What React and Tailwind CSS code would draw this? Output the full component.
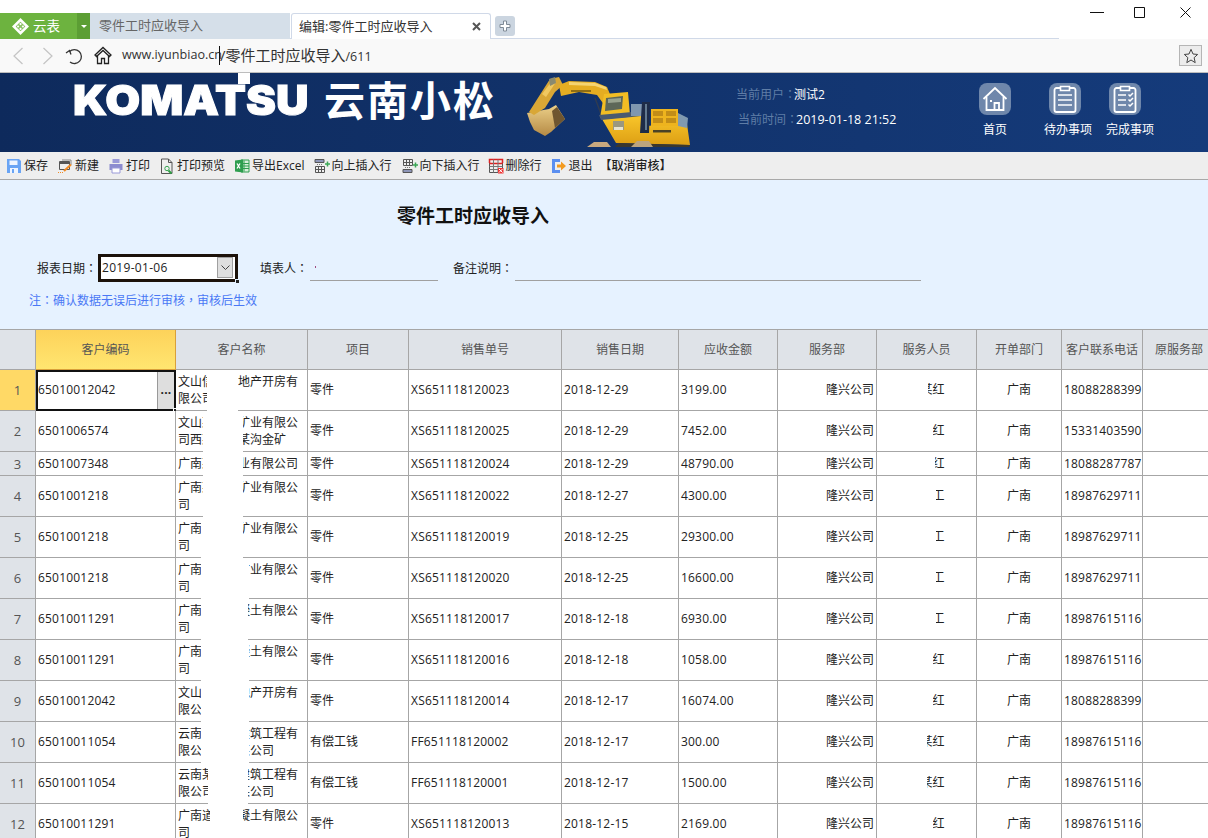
import React from "react";

const C = {
  base: "font-['Open_Sans','Noto_Sans_CJK_SC',sans-serif]",
};

const rows = [
  { n: 1, code: "65010012042", name: "文山信某某地产开房有限公司", item: "零件", no: "XS651118120023", date: "2018-12-29", amt: "3199.00", who: "某某红", tel: "18088288399", h: "h-[41px]", m1: [31, 31], m2: [29, 22] },
  { n: 2, code: "6501006574", name: "文山某某某矿业有限公司西某某某某沟金矿", item: "零件", no: "XS651118120025", date: "2018-12-29", amt: "7452.00", who: "某某红", tel: "15331403590", h: "h-[41px]", m1: [27, 40], m2: [29, 27] },
  { n: 3, code: "6501007348", name: "广南某某矿业有限公司", item: "零件", no: "XS651118120024", date: "2018-12-29", amt: "48790.00", who: "某某红", tel: "18088287787", h: "h-[24px]", m1: [27, 40], m2: [30, 28] },
  { n: 4, code: "6501001218", name: "广南某某某矿业有限公司", item: "零件", no: "XS651118120022", date: "2018-12-27", amt: "4300.00", who: "某某工", tel: "18987629711", h: "h-[41px]", m1: [27, 40], m2: [30, 29] },
  { n: 5, code: "6501001218", name: "广南某某某矿业有限公司", item: "零件", no: "XS651118120019", date: "2018-12-25", amt: "29300.00", who: "某某工", tel: "18987629711", h: "h-[41px]", m1: [25, 42], m2: [30, 29] },
  { n: 6, code: "6501001218", name: "广南某某某矿业有限公司", item: "零件", no: "XS651118120020", date: "2018-12-25", amt: "16600.00", who: "某某工", tel: "18987629711", h: "h-[41px]", m1: [25, 48], m2: [30, 29] },
  { n: 7, code: "65010011291", name: "广南某某混凝土有限公司", item: "零件", no: "XS651118120017", date: "2018-12-18", amt: "6930.00", who: "某某工", tel: "18987615116", h: "h-[41px]", m1: [25, 47], m2: [26, 33] },
  { n: 8, code: "65010011291", name: "广南某某混凝土有限公司", item: "零件", no: "XS651118120016", date: "2018-12-18", amt: "1058.00", who: "某某红", tel: "18987615116", h: "h-[41px]", m1: [25, 48], m2: [29, 27] },
  { n: 9, code: "65010012042", name: "文山信某某地产开房有限公司", item: "零件", no: "XS651118120014", date: "2018-12-17", amt: "16074.00", who: "某某红", tel: "18088288399", h: "h-[41px]", m1: [25, 48], m2: [29, 27] },
  { n: 10, code: "65010011054", name: "云南某某某建筑工程有限公司某某某公司", item: "有偿工钱", no: "FF651118120002", date: "2018-12-17", amt: "300.00", who: "某某红", tel: "18987615116", h: "h-[41px]", m1: [25, 48], m2: [22, 28] },
  { n: 11, code: "65010011054", name: "云南某某某建筑工程有限公司某某某公司", item: "有偿工钱", no: "FF651118120001", date: "2018-12-17", amt: "1500.00", who: "某某红", tel: "18987615116", h: "h-[41px]", m1: [32, 40], m2: [25, 25] },
  { n: 12, code: "65010011291", name: "广南道路混凝土有限公司", item: "零件", no: "XS651118120013", date: "2018-12-15", amt: "2169.00", who: "某某红", tel: "18987615116", h: "h-[41px]", m1: [34, 33], m2: [25, 31] },
];

const heads = ["客户名称", "项目", "销售单号", "销售日期", "应收金额", "服务部", "服务人员", "开单部门", "客户联系电话", "原服务部"];

function Mask({ left, width }) {
  return <span className="absolute top-0 bottom-[-1px] bg-white" style={{ left, width }} />;
}

function P({ children }) {
  return <span className="font-['Noto_Sans_CJK_TC',sans-serif]">{children}</span>;
}

function Logo() {
  return (
    <svg width="17" height="17" viewBox="0 0 14 14">
      <path d="M7 0 14 7 7 14 0 7Z" fill="#fff" />
      <path d="M7 3 9 5 7 7 5 5ZM3 7 5 5 7 7 5 9ZM11 7 9 9 7 7 9 5ZM7 11 5 9 7 7 9 9Z" fill="#6db33f" opacity=".8" />
      <circle cx="7" cy="5" r=".9" fill="#fff" /><circle cx="5" cy="7" r=".9" fill="#fff" /><circle cx="9" cy="7" r=".9" fill="#fff" /><circle cx="7" cy="9" r=".9" fill="#fff" />
    </svg>
  );
}

const I = {
  save: (
    <svg width="16" height="16" viewBox="0 0 16 16"><path d="M1 1h12l2 2v12H1Z" fill="#69a4f4" /><path d="M3.500 2.500h8v4.500h-8Z" fill="#eef5ff" /><path d="M4 10h8v5H4Z" fill="#eef5ff" /><path d="M6 11h2v4H6Z" fill="#69a4f4" /></svg>
  ),
  add: (
    <svg width="16" height="16" viewBox="0 0 16 16" fill="none"><path d="M2.500 3.500h10v8h-10Z" stroke="#555" /><path d="M2 5h11" stroke="#555" strokeWidth="2" /><path d="M5 2h9v5" stroke="#888" /><path d="M7 13 14 6.500" stroke="#f08a24" strokeWidth="2" /><path d="M1 14.500h5" stroke="#f08a24" strokeDasharray="1 1" /></svg>
  ),
  print: (
    <svg width="16" height="16" viewBox="0 0 16 16"><path d="M4.500 1h7v4h-7Z" fill="#9a9ad8" /><path d="M1.500 6h13v6h-13Z" fill="#8c8ccf" /><path d="M4 10h8v5H4Z" fill="#fff" stroke="#9a9ad8" /></svg>
  ),
  preview: (
    <svg width="16" height="17" viewBox="0 0 16 17" fill="none"><path d="M2.500 1h7l3.500 3.500v11h-10.500Z" stroke="#555" /><path d="M9.500 1v3.500h3.500" stroke="#555" /><circle cx="8" cy="10.500" r="2.200" stroke="#3aa655" /><path d="M9.500 12.500l3 3" stroke="#2f9e44" strokeWidth="2" /></svg>
  ),
  excel: (
    <svg width="16" height="16" viewBox="0 0 16 16"><path d="M7 2h8v12H7Z" fill="#d8f0dc" stroke="#2e9e4f" /><path d="M10 2.500v11M7 5.500h8M7 8h8M7 10.500h8" stroke="#2e9e4f" /><path d="M1 2.500 9 1.500v13L1 13.500Z" fill="#2e9e4f" /><path d="m3 5.500 3 5M6 5.500l-3 5" stroke="#fff" strokeWidth="1.300" /></svg>
  ),
  up: (
    <svg width="16" height="16" viewBox="0 0 16 16" fill="none"><path d="M1 1.500h9v3H1Z" fill="#8e96b8" stroke="#555" /><path d="M1.500 8.500h9v6h-9ZM1.500 11.500h9M4.500 8.500v6M7.500 8.500v6" stroke="#555" /><path d="M11 6h5M13.500 3.500v5" stroke="#3aa655" strokeWidth="1.500" /><path d="M3 6.500h6" stroke="#777" strokeDasharray="1 1" /></svg>
  ),
  down: (
    <svg width="16" height="16" viewBox="0 0 16 16" fill="none"><path d="M1.500 1.500h9v6h-9ZM1.500 4.500h9M4.500 1.500v6M7.500 1.500v6" stroke="#555" /><path d="M1 11.500h9v3H1Z" fill="#8e96b8" stroke="#555" /><path d="M11 7h5M13.500 4.500v5" stroke="#3aa655" strokeWidth="1.500" /><path d="M3 9.500h6" stroke="#777" strokeDasharray="1 1" /></svg>
  ),
  del: (
    <svg width="16" height="16" viewBox="0 0 16 16" fill="none"><path d="M1.500 1.500h13v13h-13Z" stroke="#555" /><path d="M1.500 5.500h13M1.500 5v-3.500h13V5" stroke="#d22" strokeWidth="1.500" /><path d="M1.500 8.500h13M1.500 11.500h13M5.500 1.500v13M10 1.500v13" stroke="#777" /><path d="M10 10h5.500v5.500H10Z" fill="#e33" /><path d="m11 11 3.500 3.500m0-3.500L11 14.500" stroke="#fff" /></svg>
  ),
  exit: (
    <svg width="16" height="16" viewBox="0 0 16 16"><path d="M1 1h8v3H4v8h5v3H1Z" fill="#5b8ff0" /><path d="M6 6.500h4V3.500l5 4.500-5 4.500v-3H6Z" fill="#f39a1e" /></svg>
  ),
};

const tools = [
  ["save", "保存", "mr-[9px]"],
  ["add", "新建", "mr-[9px]"],
  ["print", "打印", "mr-[9px]"],
  ["preview", "打印预览", "mr-[9px]"],
  ["excel", "导出Excel", "mr-[9px]"],
  ["up", "向上插入行", "mr-[10px]"],
  ["down", "向下插入行", "mr-[8px]"],
  ["del", "删除行", "mr-[9px]"],
  ["exit", "退出", "mr-[7px]"],
];

function Excavator() {
  return (
    <svg width="180" height="80" viewBox="0 0 180 80" className="shrink-0 blur-[0.4px]">
      <defs>
        <linearGradient id="bk" x1="0" y1="0" x2="0" y2="1"><stop offset="0" stopColor="#ecd089" /><stop offset="1" stopColor="#b58a45" /></linearGradient>
        <linearGradient id="bd" x1="0" y1="0" x2="0" y2="1"><stop offset="0" stopColor="#f8c52a" /><stop offset="1" stopColor="#dd9f14" /></linearGradient>
      </defs>
      {/* bucket */}
      <path d="M8 41 30 37 37 33 46 47 32 60 26 64 15 58 11 50Z" fill="url(#bk)" />
      <path d="M33 39 38 35 46 47 36 56Z" fill="#6f5630" />
      {/* arm */}
      <path d="M10 40 31 7 40 5 44 13 36 20 26 36 15 43Z" fill="#d9a736" />
      <path d="M23 22 33 9 37 10 27 25Z" fill="#f0c860" />
      <path d="M30 7 36 5 37 11 31 14Z" fill="#8a8a70" />
      {/* boom */}
      <path d="M40 13 50 9 76 10 88 15 93 27 86 34 78 23 60 20 42 24Z" fill="#e5ad22" />
      <path d="M50 10 76 11 87 15 88 18 76 14 50 13Z" fill="#f5d471" />
      <path d="M52 18h20v2H52Z" fill="#8f6d14" />
      <path d="M76 26 82 42" stroke="#303c50" strokeWidth="1.400" />
      {/* body */}
      <path d="M83 47 122 44 124 54 168 52 171 73 97 71Z" fill="url(#bd)" />
      {/* cab */}
      <path d="M85 22 109 20 111 43 81 46Z" fill="#f2bd24" />
      <path d="M87 26 104 24 103 37 86 39Z" fill="#5d6758" />
      <path d="M89 27 102 26 102 30 89 31Z" fill="#99a38f" />
      <path d="M80 43 113 40 113 45 82 48Z" fill="#4a5a70" />
      <path d="M112 32h11v12h-11Z" fill="#7f97b0" />
      {/* exhaust column */}
      <path d="M123 30h8l-1 31h-9Z" fill="#1e2c48" />
      <path d="M126 32h2v26h-2Z" fill="#62798f" />
      {/* engine hood */}
      <path d="M132 37h27v17h-27Z" fill="#eeb41e" />
      <path d="M134 39h10v5h-10ZM147 39h10v5h-10ZM134 46h10v5h-10ZM147 46h10v5h-10Z" fill="#c28d18" />
      <path d="M159 41 169 46 168 56 159 54Z" fill="#8099b0" />
      <path d="M94 49h11v9H94Z" fill="#9b9880" />
      <path d="M95 55h9v3h-9Z" fill="#e8e4d0" />
      <path d="M134 58h18v2.500h-18Z" fill="#4a4226" />
      {/* tracks */}
      <path d="M100 71 171 73 170 75H96Z" fill="#3a372e" />
      <path d="M68 75 75 70 88 70 92 75Z" fill="#c9a97f" />
      <path d="M112 75 118 69 130 69 134 75Z" fill="#bca47e" />
    </svg>
  );
}

function Tile({ children }) {
  return <div className="w-[32px] h-[32px] rounded-[8px] bg-[#6f87ab] flex items-center justify-center">{children}</div>;
}

function ClipIcon({ check }) {
  return (
    <svg width="28" height="30" viewBox="0 0 28 30" fill="none" stroke="#fff">
      <path d="M9 4H5.500a2 2 0 0 0-2 2v20a2 2 0 0 0 2 2h17a2 2 0 0 0 2-2V6a2 2 0 0 0-2-2H19" strokeWidth="1.800" />
      <path d="M9.500 2.500h9v4h-9Z" strokeWidth="1.600" />
      {check ? (
        <g strokeWidth="1.500">
          <path d="M7 11h8M7 16h8M7 21h8" />
          <path d="m17.500 10.500 1.500 1.500 3-3M17.500 15.500l1.500 1.500 3-3M17.500 20.500l1.500 1.500 3-3" />
        </g>
      ) : (
        <path d="M7 11h14M7 16h14M7 21h14" strokeWidth="1.600" />
      )}
    </svg>
  );
}

export default function App() {
  return (
    <div className={`${C.base} relative w-[1208px] h-[838px] overflow-hidden bg-white text-[12px] text-[#222]`}>
      {/* window + tabs */}
      <div className="relative h-[39px] bg-white flex items-end">
        <div className="absolute left-0 bottom-0 w-[1059px] h-px bg-[#d0d9e8]" />
        <div className="relative flex items-center gap-[4px] pl-[12px] w-[77px] h-[26px] bg-[#6db33f] text-white text-[13.500px]">
          <Logo />
          <span>云表</span>
        </div>
        <div className="relative flex items-center justify-center w-[13px] h-[26px] bg-[#5c9e34]">
          <span className="w-0 h-0 border-x-[3px] border-x-transparent border-t-[3px] border-t-white" />
        </div>
        <div className="relative flex items-center pl-[9px] w-[200px] h-[26px] bg-[#d5dfe9] text-[13px] text-[#666]">零件工时应收导入</div>
        <div className="relative flex items-center justify-between pl-[7px] pr-[9px] ml-px w-[200px] h-[26px] bg-white border border-b-0 border-[#d0d9e8] rounded-t-[3px] text-[13px] text-[#333]">
          <span>编辑:零件工时应收导入</span>
          <svg width="9" height="9" viewBox="0 0 9 9" stroke="#555" strokeWidth="2"><path d="m1 1 7 7M8 1 1 8" /></svg>
        </div>
        <div className="relative flex items-center justify-center ml-[4px] mb-[3px] w-[20px] h-[20px] bg-[#cbd5e0] rounded-[3px]">
          <svg width="12" height="12" viewBox="0 0 12 12" fill="#fff" stroke="#7f8a96" strokeWidth="1"><path d="M4.500 1h3v3.500H11v3H7.500V11h-3V7.500H1v-3h3.500Z" /></svg>
        </div>
        <div className="absolute right-[17px] top-[6px] flex items-center">
          <svg width="14" height="12" viewBox="0 0 14 12" stroke="#111"><path d="M0 6.500h14" /></svg>
          <svg className="ml-[30px]" width="11" height="11" viewBox="0 0 11 11" stroke="#111" fill="none"><path d="M.5.500h10v10H.5Z" /></svg>
          <svg className="ml-[35px]" width="11" height="11" viewBox="0 0 11 11" stroke="#111" fill="none"><path d="m.5.500 10 10M10.500.500l-10 10" /></svg>
        </div>
      </div>

      {/* address bar */}
      <div className="h-[34px] bg-[#f9f9f9] border-b border-[#bdbdbd] flex items-center">
        <svg className="ml-[12px]" width="12" height="20" viewBox="0 0 12 20" fill="none" stroke="#c4c4c4" strokeWidth="1.200"><path d="M10.500 2 2 10l8.500 8" /></svg>
        <svg className="ml-[18px]" width="12" height="20" viewBox="0 0 12 20" fill="none" stroke="#c4c4c4" strokeWidth="1.200"><path d="M1.500 2 10 10l-8.500 8" /></svg>
        <svg className="ml-[11px]" width="18" height="18" viewBox="0 0 18 18" fill="none" stroke="#333" strokeWidth="1.300"><path d="M4.500 4.500A7 7 0 1 1 5 15" /><path d="M1 6l3.500-2.500L6 7.500" /></svg>
        <svg className="ml-[11px]" width="18" height="19" viewBox="0 0 18 19" fill="none" stroke="#222" strokeWidth="1.300"><path d="M1 9 9 1.500 17 9l-1.500 1.500L9 4.500 2.500 10.500ZM3.500 10v7.500h4v-5h3v5h4V10" /></svg>
        <span className="ml-[10px] text-[12.600px] text-[#333] w-[97px] whitespace-nowrap">www.iyunbiao.cn</span>
        <span className="w-px h-[19px] bg-[#111]" />
        <span className="text-[15px] text-[#333] whitespace-nowrap">/零件工时应收导入<span className="text-[12.500px]">/611</span></span>
        <div className="ml-auto mr-[6px] w-[23px] h-[21px] bg-[#ececec] border border-[#b5b5b5] flex items-center justify-center">
          <svg width="16" height="16" viewBox="0 0 24 24" fill="none" stroke="#444" strokeWidth="1.500"><path d="m12 2 3 7 7 .7-5.300 4.800 1.600 7.500L12 18l-6.300 4 1.600-7.500L2 9.700 9 9Z" /></svg>
        </div>
      </div>

      {/* banner */}
      <div className="relative h-[79px] bg-gradient-to-r from-[#0e2a5c] to-[#153b7b] flex items-start">
        <div className="relative ml-[73px] mt-[2px] w-[235px] h-[50px] flex items-center">
          <span className="origin-left scale-x-[1.1] font-['Inter',sans-serif] font-black text-[41px] leading-none text-white whitespace-nowrap [-webkit-text-stroke:1px_white]">KOMATSU</span>
          <span className="absolute left-[165px] top-[-2px] w-[12px] h-[11px] bg-white" />
        </div>
        <span className="ml-[16px] mt-[3px] font-['Noto_Sans_CJK_SC',sans-serif] font-bold text-[41px] leading-[44px] tracking-[2px] text-white whitespace-nowrap">云南小松</span>
        <div className="ml-[23px] -mt-px"><Excavator /></div>
        <div className="ml-[37px] mt-[13px] w-[243px] shrink-0 flex flex-col gap-[9px]">
          <div className="h-[16px] leading-[16px] whitespace-nowrap"><span className="text-[#5f7da6] mr-[-2px]">当前用户<P>：</P></span><span className="text-white">测试2</span></div>
          <div className="h-[16px] leading-[16px] whitespace-nowrap ml-[2px]"><span className="text-[#5f7da6] mr-[-2px]">当前时间<P>：</P></span><span className="text-white text-[12.500px]">2019-01-18 21:52</span></div>
        </div>
        <div className="mt-[10px] flex flex-col w-[180px] shrink-0">
          <div className="flex">
            <Tile>
              <svg width="26" height="26" viewBox="0 0 26 26" fill="none" stroke="#fff" strokeWidth="1.800"><path d="M1.500 13 13 2l11.500 11" /><path d="M4.500 11v13h17V11" /><path d="M12.500 24v-7h4.500v7" /><path d="M8 15h2" /></svg>
            </Tile>
            <div className="ml-[38px]"><Tile><ClipIcon /></Tile></div>
            <div className="ml-[28px]"><Tile><ClipIcon check /></Tile></div>
          </div>
          <div className="flex text-white leading-[16px] mt-[7px] whitespace-nowrap">
            <span className="ml-[4px]">首页</span>
            <span className="ml-[37px]">待办事项</span>
            <span className="ml-[14px]">完成事项</span>
          </div>
        </div>
      </div>

      {/* toolbar */}
      <div className="h-[28px] bg-[#eeeeee] border-b border-[#a8a8a8] flex items-center pl-[6px] pt-px">
        {tools.map(([k, t, m]) => (
          <div key={t} className={`flex items-center gap-[2px] whitespace-nowrap ${m}`}>
            <span className="flex w-[16px] justify-center">{I[k]}</span>
            <span>{t}</span>
          </div>
        ))}
        <span className="whitespace-nowrap font-medium">【取消审核】</span>
      </div>

      {/* form */}
      <div className="h-[149px] bg-[#e6f2ff] pt-[23px]">
        <div className="pl-[397px] text-[19px] leading-[26px] font-bold text-[#111]">零件工时应收导入</div>
        <div className="mt-[25px] flex h-[28px] pl-[37px] items-center">
          <span className="w-[61px] whitespace-nowrap">报表日期<P>：</P></span>
          <div className="relative w-[140px] h-[28px] border-[3px] border-[#1c120a] bg-white flex items-center pl-[1px]">
            <span className="text-[#222] tracking-[0.3px]">2019-01-06</span>
            <div className="absolute right-[2px] top-0 w-[16px] h-[21px] bg-[#dfdfdf] border border-[#a0a0a0] flex items-center justify-center">
              <svg width="9" height="6" viewBox="0 0 9 6" fill="none" stroke="#444"><path d="m.5.500 4 4 4-4" /></svg>
            </div>
            <span className="absolute right-[-5px] bottom-[-5px] w-[5px] h-[5px] bg-[#222] border border-[#e6f2ff]" />
          </div>
          <span className="ml-[22px] w-[50px] whitespace-nowrap">填表人<P>：</P></span>
          <div className="self-start h-[27px] w-[128px] border-b border-[#a0a0a0]">
            <span className="block ml-[5px] mt-[12px] w-px h-[2px] bg-[#a04a80]" />
          </div>
          <span className="ml-[15px] w-[62px] whitespace-nowrap">备注说明<P>：</P></span>
          <div className="self-start h-[27px] w-[406px] border-b border-[#a0a0a0]" />
        </div>
        <div className="mt-[10px] pl-[29px] leading-[16px] text-[#4a78f5]">注<P>：</P>确认数据无误后进行审核<P>，</P>审核后生效</div>
      </div>

      {/* table */}
      <div className="overflow-hidden border-t border-[#a6a6a6]">
        <table className="table-fixed w-[1216px] border-separate border-spacing-0">
          <colgroup>
            <col className="w-[36px]" /><col className="w-[140px]" /><col className="w-[132px]" /><col className="w-[101px]" /><col className="w-[153px]" /><col className="w-[117px]" /><col className="w-[99px]" /><col className="w-[99px]" /><col className="w-[100px]" /><col className="w-[85px]" /><col className="w-[81px]" /><col className="w-[73px]" />
          </colgroup>
          <thead>
            <tr className="h-[40px]">
              <th className="bg-[#dfe3e8] border-r border-b border-[#a6a6a6]" />
              <th className="font-normal text-[#555] bg-gradient-to-b from-[#fdd25a] to-[#ffe670] border-r border-r-[#d9a03a] border-b border-b-[#d9a03a]">客户编码</th>
              {heads.map((h) => (
                <th key={h} className="font-normal text-[#555] whitespace-nowrap bg-[#dfe3e8] border-r border-b border-[#a6a6a6]">{h}</th>
              ))}
            </tr>
          </thead>
          <tbody>
            {rows.map((r) => {
              const td = "border-r border-b border-[#a6a6a6] px-[2px] bg-white whitespace-nowrap overflow-hidden";
              const num = "tracking-[0.2px]";
              const first = r.n === 1;
              return (
                <tr key={r.n} className={r.h}>
                  <td className={`text-center text-[13px] pt-[2px] text-[#555] border-r border-b border-[#a6a6a6] ${first ? "bg-[#ffd966]" : "bg-[#dfe3e8]"}`}>{r.n}</td>
                  <td className={`relative ${td} ${num} ${first ? "overflow-visible" : ""}`}>
                    {r.code}
                    {first && (
                      <div className="absolute inset-0 bottom-[-1px] right-[-1px] border-2 border-[#111] flex justify-end">
                        <span className="w-[17px] bg-[#dedede] border-l border-[#999] flex items-center justify-center font-bold leading-none pb-[2px]">...</span>
                        <span className="absolute right-[-4px] bottom-[-4px] w-[5px] h-[5px] bg-[#222] border border-white" />
                      </div>
                    )}
                  </td>
                  <td className="relative border-r border-b border-[#a6a6a6] px-[2px] bg-white leading-[17px] whitespace-normal break-all">
                    <span className="block max-h-[34px]">{r.name}</span>
                    <Mask left={r.m1[0]} width={r.m1[1]} />
                  </td>
                  <td className={td}>{r.item}</td>
                  <td className={`${td} ${num}`}>{r.no}</td>
                  <td className={`${td} ${num}`}>{r.date}</td>
                  <td className={`${td} ${num}`}>{r.amt}</td>
                  <td className={`${td} text-right`}>隆兴公司</td>
                  <td className={`relative ${td} text-center`}>
                    {r.who}
                    <Mask left={r.m2[0]} width={r.m2[1]} />
                  </td>
                  <td className={`${td} text-center`}>广南</td>
                  <td className={`${td} ${num}`}>{r.tel}</td>
                  <td className={td} />
                </tr>
              );
            })}
          </tbody>
        </table>
      </div>
    </div>
  );
}
